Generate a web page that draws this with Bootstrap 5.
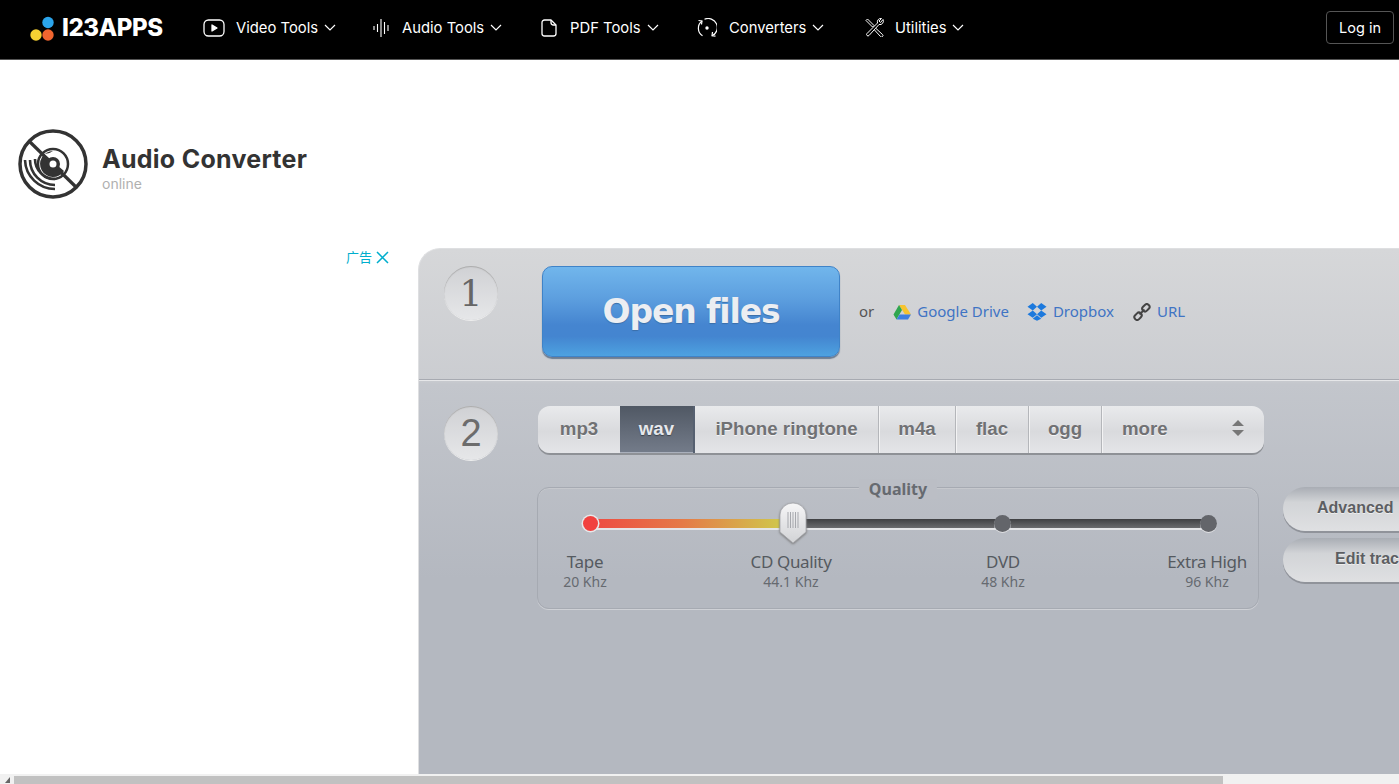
<!DOCTYPE html>
<html lang="en">
<head>
<meta charset="utf-8">
<title>Audio Converter</title>
<link href="https://cdn.jsdelivr.net/npm/bootstrap@5.3.0/dist/css/bootstrap.min.css" rel="stylesheet">
<style>
html,body{height:100%;overflow:hidden;background:#fff}
body{font-family:Inter,"Liberation Sans",sans-serif}
.app-shell{height:784px;width:1399px;overflow:hidden}
.top-bar{height:60px;background:#000;border-bottom:1px solid #555;padding:0 5px 4px 30px;flex:none;flex-wrap:nowrap}
.brand-dots{width:26px;height:26px;flex:none}
.brand-name{font:800 24px/1 Inter,sans-serif;color:#fff;margin-left:6px;letter-spacing:-.4px;width:103px}
.nav-strip{margin-left:38px}
.nav-tool{color:#fff;font-size:14.800px;line-height:20px;text-decoration:none;display:flex;align-items:center;white-space:nowrap}
.nav-tool:hover{color:#fff}
.nav-tool svg{flex:none}
.nt-video{width:170px}.nt-audio{width:168px}.nt-pdf{width:156px}.nt-conv{width:168px}
.nt-video .nav-label{margin-left:11px}.nt-audio .nav-label{margin-left:11px}.nt-pdf .nav-label{margin-left:13px}.nt-conv .nav-label{margin-left:12px}.nt-util .nav-label{margin-left:11px}
.chev{margin-left:6px}
.login-btn{width:68px;height:33px;padding:0;font-size:14.5px;line-height:31px;color:#fff;border:1px solid #555;border-radius:4px;background:#000;margin-left:auto}
.title-band{height:188px;padding:68px 0 0 18px;flex:none}
.title-band>svg{margin-top:1px}
.app-name{font:700 25px/30px Inter,sans-serif;color:#333;margin:0;letter-spacing:.27px}
.app-sub{font-size:14px;line-height:20px;color:#b0b0b0}
.title-text{margin-left:14px;padding-top:16px}
.work-area{min-height:0}
.ad-column{width:418px;flex:none;padding:0 29px 0 0;height:100%}
.ad-mark{color:#00aecd;font:13px/18px "Noto Sans CJK SC",sans-serif}
.tool-panel{width:1100px;flex:none;height:100%;border:1px solid #dedfe1;border-right:0;border-bottom:0;border-top-left-radius:22px;background:linear-gradient(#d6d7d9 0,#cbcdd1 130px,#c3c6cc 135px,#b4b8c0 330px);font-family:"Noto Sans",Tahoma,sans-serif}
.step-one{height:131px;padding:17px 0 0 25px;border-bottom:1px solid #a7aab1;box-shadow:0 1px 0 #e6e7e9}
.step-ball{width:54px;height:54px;border-radius:50%;flex:none;background:linear-gradient(#d0d1d4,#e6e7e9);box-shadow:inset 0 1px 1px #aaa,0 1px 0 #eee;font:36px/56px "DejaVu Serif","Liberation Serif",serif;color:#666;text-align:center}
.step-ball.arial{font-family:"Liberation Sans",sans-serif;font-size:38px;line-height:54px;color:#6c6c6c}
.open-btn{width:298px;height:91px;margin-left:44px;border-radius:10px;border:1px solid #3f83c8;background:linear-gradient(#71b6ec 0,#5d9fdf 35%,#4585d0 65%,#4485d0 78%,#4da2e0 100%);box-shadow:0 2px 1px #6c7d92;color:#eceef2;font:700 33px/89px "DejaVu Sans","Liberation Sans",sans-serif;letter-spacing:-1.1px;text-align:center;padding:0;text-shadow:0 1px 1px #3b6ea8}
.open-btn:hover{color:#eceef2;background:linear-gradient(#71b6ec 0,#5d9fdf 35%,#4585d0 65%,#4485d0 78%,#4da2e0 100%);border-color:#3f83c8}
.src-links{margin-left:19px;height:91px;font-size:15px;color:#555}
.src-link{color:#3f74c4;text-decoration:none;display:flex;align-items:center;white-space:nowrap}
.src-drive{margin-left:19px}.src-box{margin-left:18px}.src-url{margin-left:19px}
.src-link svg{margin-right:6px;flex:none}
.step-two{padding:26px 0 0 25px}
.settings-col{margin-left:40px}
.fmt-bar{width:726px;height:47px;border-radius:12px;box-shadow:0 2px 0 #8e9196;background:linear-gradient(#e9eaec,#d9dadd 55%,#e4e5e8);margin-bottom:34px}
.fmt-tab{font:700 18.700px/45px "Liberation Sans",sans-serif;color:#707174;text-shadow:0 1px 0 #f4f4f5;text-align:center;border-right:1px solid #b4b6ba;box-shadow:1px 0 0 #f3f3f4;height:47px;text-decoration:none;flex:none}
.fmt-tab:hover{color:#707174}
.t-mp3{width:82px;border-radius:12px 0 0 12px;border-right:0;box-shadow:none}
.t-wav{width:75px;background:linear-gradient(#505864,#747c8a);color:#e6e8ec;text-shadow:0 1px 1px #3c424c;border-right:2px solid #566070;box-shadow:inset 0 -1px 0 #aab0bc}
.t-wav:hover{color:#e6e8ec}
.t-iph{width:184px}.t-m4a{width:77px}.t-flac{width:73px}.t-ogg{width:73px}
.t-more{width:162px;border:0;box-shadow:none;text-align:left;padding:0 19px 3px 20px;display:flex;justify-content:space-between;align-items:center}
.quality-box{width:722px;height:122px;border:1px solid #a6aab2;border-radius:12px;box-shadow:0 1px 0 #cfd1d6,inset 0 1px 0 #c6c8cd;position:relative;margin-left:-1px;padding:18px 0 0 0}
.quality-title{position:absolute;left:50%;transform:translateX(-50%);top:-9px;background:#bbbec5;padding:0 10px;font:700 16px/20px "Noto Sans",sans-serif;color:#666a70}
.slide-track{height:9px;margin:13px 50px 0 53px;background:linear-gradient(#3f4043,#6a6b6e);position:relative;box-shadow:0 2px 0 #e4e5e8}
.slide-fill{position:absolute;left:0;top:0;bottom:0;width:203px;background:linear-gradient(90deg,#ee4a42,#e57a47 45%,#cdd14d)}
.stop{position:absolute;top:-4px;width:17px;height:17px;border-radius:50%;background:#63656a;box-shadow:0 1px 0 #dfe0e3}
.stop-a{left:-8px;top:-3px;width:15px;height:15px;background:#f1413f;box-shadow:0 0 0 1.500px #e8e8ea}
.stop-c{left:403px}.stop-d{left:609px}
.slide-knob{position:absolute;left:188px;top:-17px;width:28px;height:42px;filter:drop-shadow(0 1px 1px #777)}
.stop-row{margin-top:23px}
.stop-text{width:120px;text-align:center;color:#555a60;font-size:17px;line-height:22px;flex:none;letter-spacing:-.35px}
.stop-text small{display:block;font-size:14px;line-height:18px;color:#666a70;letter-spacing:0}
.st-1{margin-left:-13px}.st-2{margin-left:86px}.st-3{margin-left:92px}.st-4{margin-left:84px}
.side-btns{margin-left:24px;width:146px}
.side-btn{height:44px;border-radius:22px;font:700 16px/42px "Liberation Sans",sans-serif;color:#5c5e62;text-align:left;background:linear-gradient(#a9adb4,#d2d4d7 35%,#dfe0e2);box-shadow:0 2px 0 #90939a;white-space:nowrap;text-shadow:0 1px 0 #eee;margin-bottom:7px;overflow:hidden}
.sb-adv{padding-left:34px}.sb-edit{padding-left:52px}
.fake-scroll{height:10px;background:#f1f1f1;flex:none}
.scroll-left{width:14px;flex:none;display:flex;align-items:flex-end;justify-content:center;padding-bottom:1px}
.scroll-thumb{width:1209px;height:8px;margin-top:2px;background:#c1c1c1}
</style>
</head>
<body>
<div class="app-shell d-flex flex-column">
  <nav class="top-bar navbar navbar-expand navbar-dark d-flex align-items-center">
    <svg class="brand-dots" viewBox="0 0 26 26"><circle cx="18" cy="7.500" r="5.700" fill="#2ba4ea"/><circle cx="6" cy="20" r="5.700" fill="#f6d033"/><circle cx="18" cy="20" r="5.700" fill="#f0652f"/></svg>
    <span class="brand-name">I23APPS</span>
    <div class="nav-strip d-flex align-items-center">
      <a class="nav-tool nt-video" href="#">
        <svg width="22" height="18" viewBox="0 0 22 18" fill="none" stroke="#fff" stroke-width="1.300"><rect x="1" y="1" width="20" height="16" rx="4.500"/><path d="M9 6l5 3-5 3z" fill="#fff" stroke-linejoin="round"/></svg>
        <span class="nav-label">Video Tools</span>
        <svg class="chev" width="12" height="7" viewBox="0 0 12 7" fill="none" stroke="#fff" stroke-width="1.200"><path d="M1 1l5 5 5-5"/></svg>
      </a>
      <a class="nav-tool nt-audio" href="#">
        <svg width="18" height="20" viewBox="0 0 18 20" fill="none" stroke="#fff" stroke-width="1.100"><path d="M1 8v4M4.500 6v8M8 1v18M11.500 4v12M15 7v6"/></svg>
        <span class="nav-label">Audio Tools</span>
        <svg class="chev" width="12" height="7" viewBox="0 0 12 7" fill="none" stroke="#fff" stroke-width="1.200"><path d="M1 1l5 5 5-5"/></svg>
      </a>
      <a class="nav-tool nt-pdf" href="#">
        <svg width="16" height="18" viewBox="0 0 16 18" fill="none" stroke="#fff" stroke-width="1.300" stroke-linejoin="round"><path d="M3.500 1H10l5 5v8.500a2.500 2.500 0 0 1-2.500 2.500h-9A2.500 2.500 0 0 1 1 14.500v-11A2.500 2.500 0 0 1 3.500 1z"/><path d="M10 1v2.500A2.500 2.500 0 0 0 12.500 6H15"/></svg>
        <span class="nav-label">PDF Tools</span>
        <svg class="chev" width="12" height="7" viewBox="0 0 12 7" fill="none" stroke="#fff" stroke-width="1.200"><path d="M1 1l5 5 5-5"/></svg>
      </a>
      <a class="nav-tool nt-conv" href="#">
        <svg width="20" height="20" viewBox="0 0 20 20" fill="none" stroke="#fff" stroke-width="1.200"><path d="M5 3A9 9 0 0 0 5.500 17.800"/><path d="M7.500 1.300A9 9 0 0 1 15 17.800"/><path d="M1.500 2.500L5 3l-.5 3.500M15.500 14l-.5 3.800 3.500.4"/><circle cx="10" cy="10" r="1.700" fill="#fff" stroke="none"/></svg>
        <span class="nav-label">Converters</span>
        <svg class="chev" width="12" height="7" viewBox="0 0 12 7" fill="none" stroke="#fff" stroke-width="1.200"><path d="M1 1l5 5 5-5"/></svg>
      </a>
      <a class="nav-tool nt-util" href="#">
        <svg width="19" height="19" viewBox="0 0 19 19" fill="none" stroke="#fff" stroke-width="1" stroke-linejoin="round"><path d="M1 2.500L2.500 1 9 7.500 7.500 9z"/><path d="M11 10.500l6.500 6a1.300 1.300 0 0 1-2 2L9.500 12"/><path d="M18 1.500l-2.500 3-1.500-1.500 2.500-2.500a3.500 3.500 0 0 0-4 4.500L2 15.500a1.400 1.400 0 0 0 2 2L14 6.500a3.500 3.500 0 0 0 4-5z"/></svg>
        <span class="nav-label">Utilities</span>
        <svg class="chev" width="12" height="7" viewBox="0 0 12 7" fill="none" stroke="#fff" stroke-width="1.200"><path d="M1 1l5 5 5-5"/></svg>
      </a>
    </div>
    <button class="btn login-btn" type="button">Log in</button>
  </nav>

  <div class="title-band d-flex align-items-start">
    <svg width="70" height="70" viewBox="0 0 70 70" fill="none" stroke="#333"><circle cx="35" cy="35" r="33" stroke-width="3.500"/><path d="M11 12l48 47" stroke-width="3.200"/><circle cx="35" cy="35" r="15" stroke-width="2.500"/><path d="M35 22a13 13 0 1 0 11 20L26 25a13 13 0 0 0 9-3z" fill="#333" stroke="none"/><circle cx="35" cy="35" r="7" fill="#333" stroke="none"/><circle cx="35" cy="35" r="3.500" fill="#fff" stroke="none"/><path d="M17 33a20 20 0 0 0 20 20M12 34a25 25 0 0 0 25 25M7 34a30 30 0 0 0 30 29" stroke-width="2.600" transform="translate(0 -3)"/></svg>
    <div class="title-text">
      <h1 class="app-name">Audio Converter</h1>
      <div class="app-sub">online</div>
    </div>
  </div>

  <div class="work-area d-flex flex-grow-1">
    <div class="ad-column d-flex justify-content-end align-items-start">
      <span class="ad-mark d-flex align-items-center">广告<svg class="ms-1" width="13" height="13" viewBox="0 0 13 13" fill="none" stroke="#00aecd" stroke-width="1.500"><path d="M1 1l11 11M12 1L1 12"/></svg></span>
    </div>
    <main class="tool-panel">
      <section class="step-one d-flex align-items-start">
        <div class="step-ball">1</div>
        <a class="btn open-btn" href="#">Open files</a>
        <div class="src-links d-flex align-items-center">
          <span>or</span>
          <a class="src-link src-drive" href="#">
            <svg width="18" height="16" viewBox="0 0 18 16"><path d="M12 1l6 9.500h-6L6 1z" fill="#f6c42f"/><path d="M6 1l3 5-5.500 9.500-3-5z" fill="#2fa650"/><path d="M6.500 10.500H18l-3 5H3.500z" fill="#3d7fe0"/></svg>
            Google Drive
          </a>
          <a class="src-link src-box" href="#">
            <svg width="20" height="19" viewBox="0 0 18 18" fill="#1c79dd"><path d="M5 1L0 4.500 5 8l4-3.500zM13 1l5 3.500L13 8 9 4.500zM0 11.500L5 8l4 3.500L5 15zM18 11.500L13 8l-4 3.500 4 3.500zM5 15.800l4 2 4-2-4-3.300z"/></svg>
            Dropbox
          </a>
          <a class="src-link src-url" href="#">
            <svg width="18" height="18" viewBox="0 0 18 18" fill="none" stroke="#444" stroke-width="2"><rect x="9" y="1.500" width="8" height="5.500" rx="2.700" transform="rotate(-45 13 4.200) translate(-.5 .3)"/><rect x="1" y="10.500" width="8" height="5.500" rx="2.700" transform="rotate(-45 5 13.200)"/><path d="M6.500 11.500l5-5" stroke-width="1.800"/></svg>
            URL
          </a>
        </div>
      </section>
      <section class="step-two d-flex align-items-start">
        <div class="step-ball arial">2</div>
        <div class="settings-col">
          <div class="fmt-bar d-flex">
            <a class="fmt-tab t-mp3" href="#">mp3</a>
            <a class="fmt-tab t-wav" href="#">wav</a>
            <a class="fmt-tab t-iph" href="#">iPhone ringtone</a>
            <a class="fmt-tab t-m4a" href="#">m4a</a>
            <a class="fmt-tab t-flac" href="#">flac</a>
            <a class="fmt-tab t-ogg" href="#">ogg</a>
            <a class="fmt-tab t-more" href="#">more<svg width="14" height="18" viewBox="0 0 14 18" fill="#777"><path d="M7 1l6 6H1zM1 11h12l-6 6z"/></svg></a>
          </div>
          <div class="d-flex align-items-start">
            <div class="quality-box">
              <div class="quality-title">Quality</div>
              <div class="slide-track">
                <div class="slide-fill"></div>
                <span class="stop stop-a"></span>
                <span class="stop stop-c"></span>
                <span class="stop stop-d"></span>
                <svg class="slide-knob" viewBox="0 0 28 42"><defs><linearGradient id="kg" x1="0" y1="0" x2="0" y2="1"><stop offset="0" stop-color="#f6f6f7"/><stop offset="1" stop-color="#d2d3d6"/></linearGradient></defs><path d="M1 13a13 12 0 0 1 26 0v17L14 41 1 30z" fill="url(#kg)" stroke="#a4a6ab" stroke-width=".8"/><path d="M9 10v16M11.500 10v16M14 10v16M16.500 10v16M19 10v16" stroke="#a7a9ae" stroke-width="1"/></svg>
              </div>
              <div class="stop-row d-flex">
                <div class="stop-text st-1">Tape<small>20 Khz</small></div>
                <div class="stop-text st-2">CD Quality<small>44.1 Khz</small></div>
                <div class="stop-text st-3">DVD<small>48 Khz</small></div>
                <div class="stop-text st-4">Extra High<small>96 Khz</small></div>
              </div>
            </div>
            <div class="side-btns">
              <div class="side-btn sb-adv">Advanced</div>
              <div class="side-btn sb-edit">Edit tracks</div>
            </div>
          </div>
        </div>
      </section>
    </main>
  </div>

  <div class="fake-scroll d-flex">
    <div class="scroll-left"><svg width="5" height="6" viewBox="0 0 5 6"><path d="M5 0v6H0z" fill="#666"/></svg></div>
    <div class="scroll-thumb"></div>
  </div>
</div>
<script src="https://cdn.jsdelivr.net/npm/bootstrap@5.3.0/dist/js/bootstrap.bundle.min.js"></script>
</body>
</html>
